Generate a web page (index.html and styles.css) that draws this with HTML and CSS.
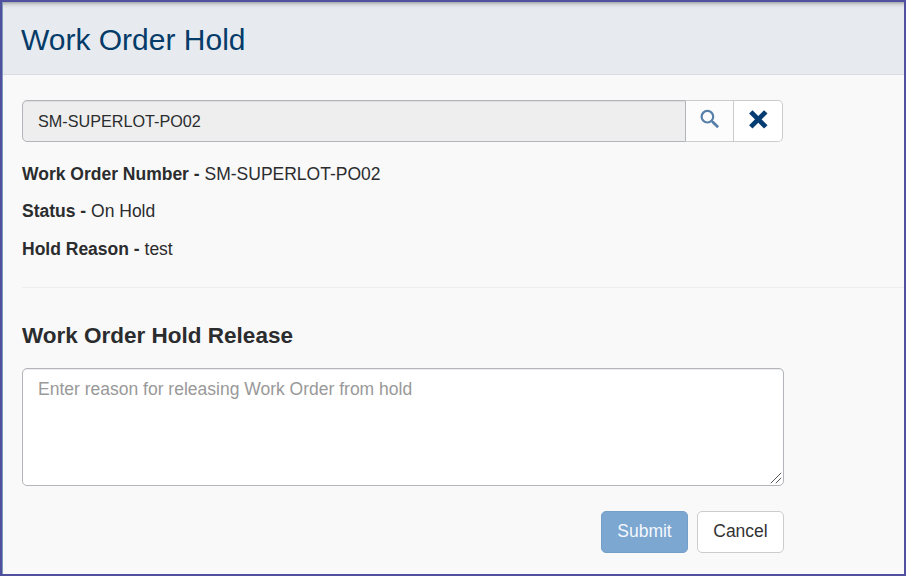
FILE: index.html
```html
<!DOCTYPE html>
<html lang="en">
<head>
<meta charset="utf-8">
<title>Work Order Hold</title>
<link rel="stylesheet" href="styles.css">
</head>
<body>
<div class="window">
  <header class="page-header"><h1>Work Order Hold</h1></header>
  <main class="content">
    <div class="lookup">
      <input class="lookup-input" type="text" value="SM-SUPERLOT-PO02" readonly aria-label="Work Order">
      <button class="lookup-button search" type="button" aria-label="Search">
        <svg width="20" height="20" viewBox="0 0 20 20" fill="none" stroke="#577fa8"><circle cx="7.4" cy="7.7" r="5.8" stroke-width="2.2"/><path d="M11.5 11.8l1.8 1.8" stroke-width="2.2"/><path d="M12.8 13l5.3 5.2" stroke-width="2.8"/></svg>
      </button>
      <button class="lookup-button clear" type="button" aria-label="Clear">
        <svg width="20" height="20" viewBox="0 0 20 20" fill="none" stroke="#053d73" stroke-width="4.8"><path d="M2.8 2.9l15 15M17.8 2.9L2.8 17.9"/></svg>
      </button>
    </div>
    <div class="details">
      <p><strong>Work Order Number - </strong><span>SM-SUPERLOT-PO02</span></p>
      <p><strong>Status - </strong><span>On Hold</span></p>
      <p><strong>Hold Reason - </strong><span>test</span></p>
    </div>
    <hr>
    <h2>Work Order Hold Release</h2>
    <div class="reason-field">
      <textarea class="reason" placeholder="Enter reason for releasing Work Order from hold"></textarea>
      <svg class="resize-grip" width="12" height="12" viewBox="0 0 12 12" stroke="#555" stroke-width="1"><path d="M.8 11.2L11.2.8M5.8 11.2L11.2 5.8"/></svg>
    </div>
    <div class="actions">
      <button class="button submit" type="button">Submit</button>
      <button class="button cancel" type="button">Cancel</button>
    </div>
  </main>
</div>
</body>
</html>
```
FILE: styles.css
```css
* { box-sizing: border-box; }
body {
  margin: 0;
  font-family: "Liberation Sans", Arial, sans-serif;
  font-size: 17.5px;
  color: #2b2c2e;
}
.window {
  height: 576px;
  overflow: hidden;
  border: 2px solid #50509f;
  background: #f9f9f9;
  box-shadow: inset 1px 0 #7d98b8;
}
.page-header {
  height: 73px;
  margin-left: 1px;
  padding: 20px 18px 0;
  border-bottom: 1px solid #d9dde3;
  background: linear-gradient(#a5a8ab 0, #c8cbce 2px, #dde0e4 4px, #e7ebf0 7px);
}
h1 {
  margin: 0;
  color: #053b68;
  font-size: 30px;
  font-weight: 400;
  line-height: 36px;
}
.content { padding: 25px 0 0 20px; }
.lookup { display: flex; width: 761px; height: 42px; }
.lookup-input {
  width: 664px;
  padding: 1px 15px;
  border: 1px solid #b2b5b9;
  border-radius: 5px 0 0 5px;
  outline: 0;
  background: #eee;
  box-shadow: inset 0 1px 1px rgba(0, 0, 0, .075);
  color: #2b2c2e;
  font: 16.2px "Liberation Sans", Arial, sans-serif;
}
.lookup-button {
  display: flex;
  justify-content: center;
  padding: 8px 0 0;
  border: 1px solid #ccc;
  border-left: 0;
  background: #fff;
}
.search { width: 48px; background: #fcfcfc; }
.clear { width: 49px; border-radius: 0 5px 5px 0; }
.details { padding-top: 20px; }
.details p { margin: 0; line-height: 25px; }
.details p + p { margin-top: 12px; }
.details p + p + p { margin-top: 13px; }
hr {
  margin: 25px 0 0;
  border: 0;
  border-top: 1px solid #eee;
}
h2 {
  margin: 35px 0 19px;
  font-size: 22.5px;
  line-height: 26px;
}
.reason-field { position: relative; width: 762px; }
.reason {
  display: block;
  width: 762px;
  height: 118px;
  padding: 8px 15px;
  border: 1px solid #b2b5b9;
  border-radius: 5px;
  outline: 0;
  resize: none;
  background: #fff;
  box-shadow: inset 0 1px 1px rgba(0, 0, 0, .075);
  font: 17.5px/25px "Liberation Sans", Arial, sans-serif;
}
.reason::placeholder { color: #999; }
.resize-grip {
  position: absolute;
  right: 2px;
  bottom: 2px;
}
.actions {
  display: flex;
  justify-content: flex-end;
  gap: 9px;
  width: 762px;
  margin-top: 25px;
}
.button {
  width: 87px;
  height: 42px;
  padding: 0 0 2px;
  border: 1px solid #ccc;
  border-radius: 5px;
  background: #fff;
  color: #333;
  font: 17.5px "Liberation Sans", Arial, sans-serif;
}
.submit { border-color: #739fc8; background: #7ba7d1; color: #f5f8fc; }
```
